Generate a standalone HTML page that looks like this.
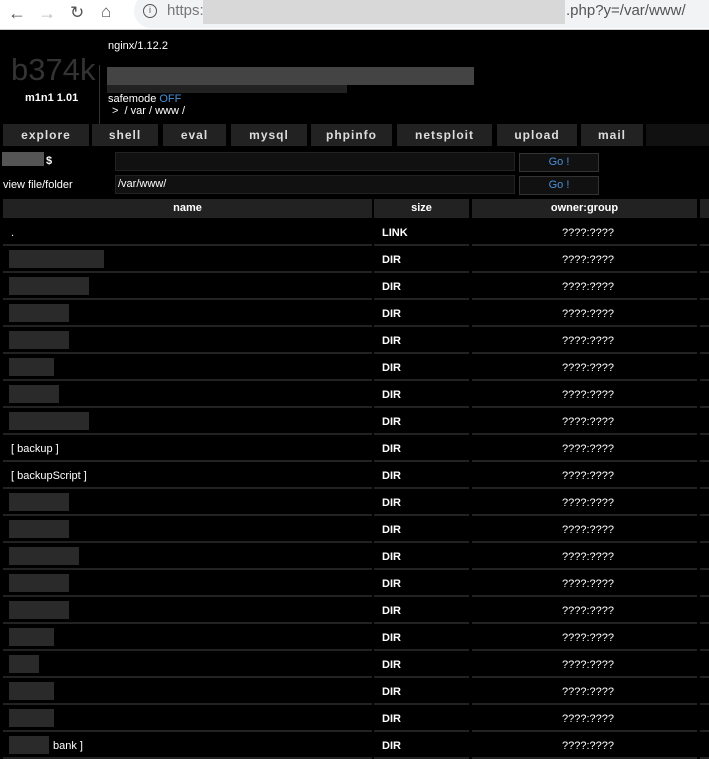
<!DOCTYPE html>
<html><head><style>
*{margin:0;padding:0;box-sizing:border-box}
body{width:709px;height:757px;overflow:hidden;background:#000;font-family:"Liberation Sans",sans-serif;font-size:11px;color:#fff;position:relative}
.a{position:absolute}
.bar{left:0;top:0;width:709px;height:30px;background:#fff;border-bottom:1px solid #ccc}
.url{left:134px;top:-6px;width:600px;height:34px;background:#f1f3f4;border-radius:17px}
.nav{top:124px;height:22px;background:#222;color:#ddd;font-weight:bold;font-size:12px;letter-spacing:1px;text-align:center;line-height:22px}
.inp{background:#111;border:1px solid #222;height:19px;color:#fff;line-height:17px;padding-left:2px}
.go{background:#111;border:1px solid #333;color:#4a90d9;text-align:center;line-height:17px;height:19px}
.th{top:199px;height:19px;background:#222;text-align:center;line-height:19px;font-weight:bold;font-size:11px}
.row{left:3px;width:706px;height:27px;border-bottom:2px solid #222}
.row span{position:absolute;top:8px;font-size:11px}
</style></head><body>
<div class="a bar"></div>
<div class="a url"></div>
<div class="a" style="left:8px;top:3px;font-size:18px;color:#555">&#8592;</div>
<div class="a" style="left:38px;top:3px;font-size:18px;color:#bbb">&#8594;</div>
<div class="a" style="left:70px;top:3px;font-size:17px;color:#555">&#8635;</div>
<div class="a" style="left:101px;top:2px;font-size:17px;color:#555">&#8962;</div>
<div class="a" style="left:143px;top:4px;width:14px;height:14px;border:1.5px solid #555;border-radius:50%;font-size:9px;text-align:center;line-height:11px;color:#555">i</div>
<div class="a" style="left:167px;top:2px;font-size:15px;color:#777">https:</div>
<div class="a" style="left:203px;top:0;width:362px;height:24px;background:#d8d8d8"></div>
<div class="a" style="left:566px;top:2px;font-size:15px;color:#555">.php?y=/var/www/</div>

<div class="a" style="left:11px;top:52px;font-size:31px;color:#333">b374k</div>
<div class="a" style="left:25px;top:92px;font-size:11px;font-weight:bold">m1n1 1.01</div>
<div class="a" style="left:99px;top:65px;width:1px;height:80px;background:#333"></div>
<div class="a" style="left:108px;top:40px;font-size:11px">nginx/1.12.2</div>
<div class="a" style="left:107px;top:67px;width:367px;height:18px;background:#444"></div>
<div class="a" style="left:107px;top:85px;width:240px;height:8px;background:#222"></div>
<div class="a" style="left:108px;top:93px">safemode <span style="color:#4a90d9">OFF</span></div>
<div class="a" style="left:112px;top:105px">&gt; &nbsp;/ var / www /</div>

<div class="a nav" style="left:3px;width:86px">explore</div>
<div class="a nav" style="left:92px;width:66px">shell</div>
<div class="a nav" style="left:163px;width:63px">eval</div>
<div class="a nav" style="left:231px;width:76px">mysql</div>
<div class="a nav" style="left:311px;width:81px">phpinfo</div>
<div class="a nav" style="left:397px;width:95px">netsploit</div>
<div class="a nav" style="left:497px;width:80px">upload</div>
<div class="a nav" style="left:581px;width:62px">mail</div>
<div class="a nav" style="left:646px;width:63px;background:#111"></div>

<div class="a" style="left:2px;top:152px;width:42px;height:14px;background:#555"></div>
<div class="a" style="left:46px;top:155px;font-weight:bold">$</div>
<div class="a inp" style="left:115px;top:152px;width:400px"></div>
<div class="a go" style="left:519px;top:153px;width:80px">Go !</div>
<div class="a" style="left:3px;top:179px">view file/folder</div>
<div class="a inp" style="left:115px;top:175px;width:400px">/var/www/</div>
<div class="a go" style="left:519px;top:176px;width:80px">Go !</div>

<div class="a th" style="left:3px;width:369px">name</div>
<div class="a th" style="left:374px;width:95px">size</div>
<div class="a th" style="left:472px;width:225px">owner:group</div>
<div class="a th" style="left:700px;width:9px"></div>

<div id="rows"></div>
<script>
var names=['.','','','','','','','','[ backup ]','[ backupScript ]','','','','','','','','','','bank ]'];
var w=[0,95,80,60,60,45,50,80,0,0,60,60,70,60,60,45,30,45,45,40];
var h='';
for(var i=0;i<names.length;i++){
var t=219+i*27;
h+='<div class="a row" style="top:'+t+'px">';
if(w[i])h+='<div class="a" style="left:6px;top:4px;width:'+w[i]+'px;height:18px;background:#2a2a2a"></div>';
if(names[i])h+='<span style="left:'+(i==19?50:8)+'px">'+names[i]+'</span>';
h+='<span style="left:379px;font-weight:bold">'+(i==0?'LINK':'DIR')+'</span>';
h+='<span style="left:559px">????:????</span>';
h+='<div class="a" style="left:369px;top:0;width:2px;height:27px;background:#000"></div>';
h+='<div class="a" style="left:466px;top:0;width:3px;height:27px;background:#000"></div>';
h+='<div class="a" style="left:694px;top:0;width:3px;height:27px;background:#000"></div>';
h+='</div>';
}
document.getElementById('rows').innerHTML=h;
</script>
</body></html>
